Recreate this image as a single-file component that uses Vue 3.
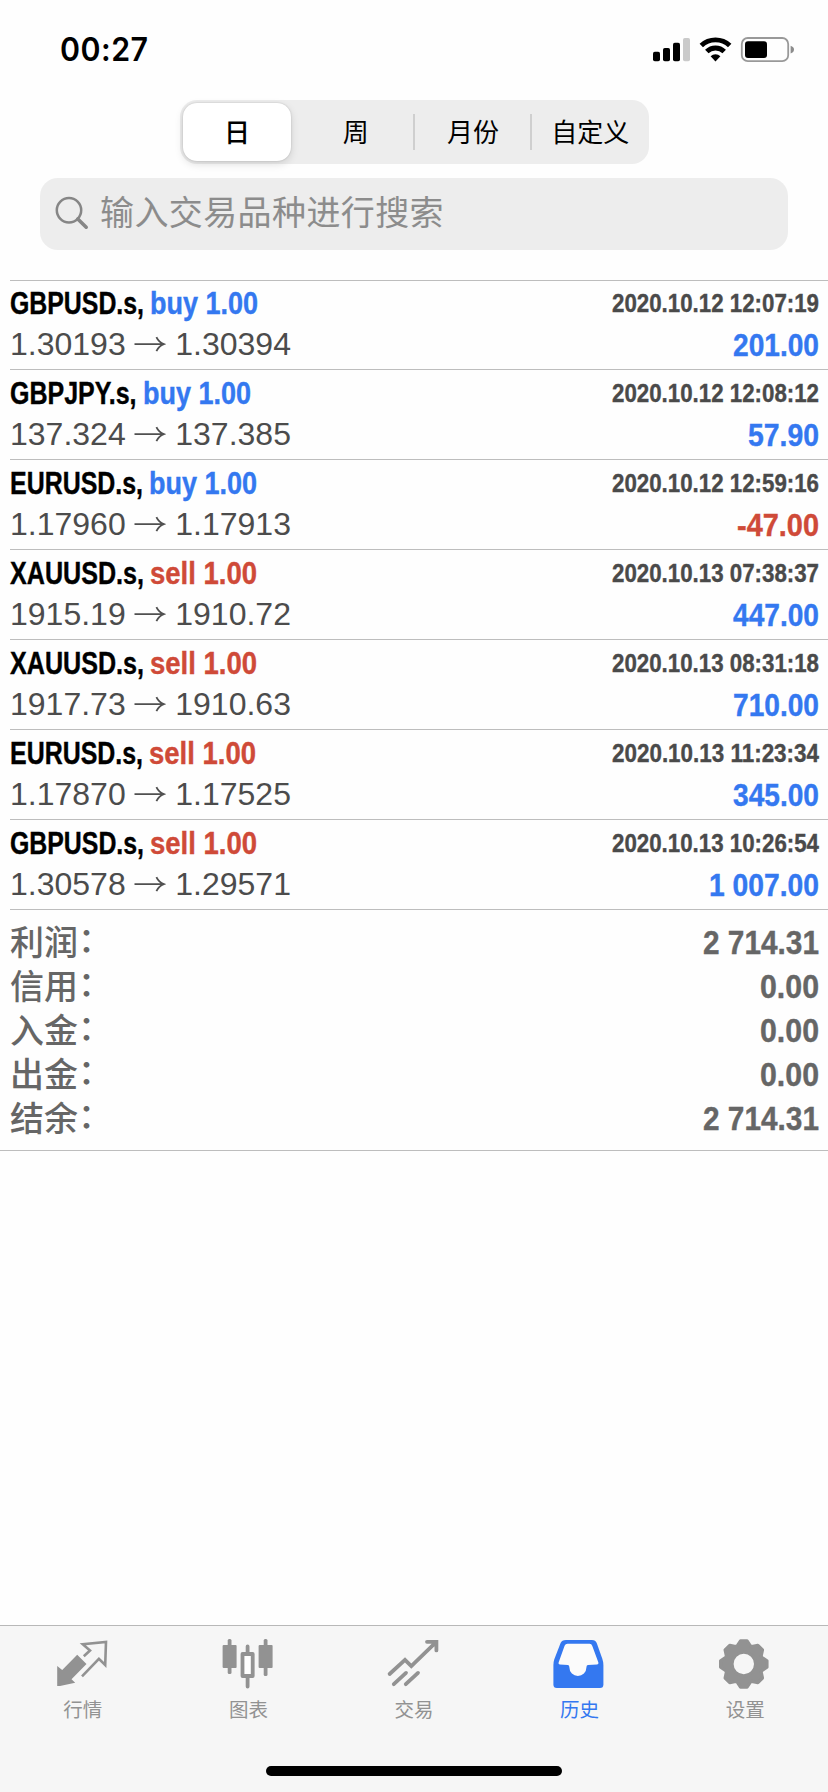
<script setup>
const segments = ['日', '周', '月份', '自定义']

const deals = [
  { symbol: 'GBPUSD.s,', sw: 134, side: 'buy', open: '1.30193', close: '1.30394', time: '2020.10.12 12:07:19', profit: '201.00', pw: 86 },
  { symbol: 'GBPJPY.s,', sw: 126.5, side: 'buy', open: '137.324', close: '137.385', time: '2020.10.12 12:08:12', profit: '57.90', pw: 71 },
  { symbol: 'EURUSD.s,', sw: 133, side: 'buy', open: '1.17960', close: '1.17913', time: '2020.10.12 12:59:16', profit: '-47.00', pw: 82 },
  { symbol: 'XAUUSD.s,', sw: 134, side: 'sell', open: '1915.19', close: '1910.72', time: '2020.10.13 07:38:37', profit: '447.00', pw: 86 },
  { symbol: 'XAUUSD.s,', sw: 134, side: 'sell', open: '1917.73', close: '1910.63', time: '2020.10.13 08:31:18', profit: '710.00', pw: 86 },
  { symbol: 'EURUSD.s,', sw: 133, side: 'sell', open: '1.17870', close: '1.17525', time: '2020.10.13 11:23:34', profit: '345.00', pw: 86 },
  { symbol: 'GBPUSD.s,', sw: 134, side: 'sell', open: '1.30578', close: '1.29571', time: '2020.10.13 10:26:54', profit: '1 007.00', pw: 110 },
]

const totals = [
  { label: '利润', value: '2 714.31', w: 116 },
  { label: '信用', value: '0.00', w: 59 },
  { label: '入金', value: '0.00', w: 59 },
  { label: '出金', value: '0.00', w: 59 },
  { label: '结余', value: '2 714.31', w: 116 },
]

const tabs = [
  { id: 'quotes', label: '行情' },
  { id: 'chart', label: '图表' },
  { id: 'trade', label: '交易' },
  { id: 'history', label: '历史' },
  { id: 'settings', label: '设置' },
]

// Condenses a bold label horizontally to the given width.
const vCondense = {
  mounted(el, { value }) {
    const natural = el.getBoundingClientRect().width
    el.style.transform = `scaleX(${value / natural})`
    el.style.marginRight = `${value - natural}px`
  },
}

function gearPath(cx, cy) {
  const pts = []
  for (let i = 0; i < 8; i++) {
    const base = i * 45 - 90
    for (const [da, r] of [[-20, 19.2], [-8, 23.4], [8, 23.4], [20, 19.2]]) {
      const a = ((base + da) * Math.PI) / 180
      pts.push(`${(cx + r * Math.cos(a)).toFixed(2)} ${(cy + r * Math.sin(a)).toFixed(2)}`)
    }
  }
  const hole = `M${cx - 11.8} ${cy}a11.8 11.8 0 1 0 23.6 0a11.8 11.8 0 1 0 -23.6 0Z`
  return `M${pts.join('L')}Z${hole}`
}
const gear = gearPath(24.8, 26)
</script>

<template>
  <div class="screen">
    <header class="status">
      <span v-condense="88.5" class="clock">00:27</span>
      <svg class="indicators" width="142" height="26" viewBox="0 0 142 26">
        <rect x="0" y="14.7" width="7" height="9.6" rx="1.8" />
        <rect x="10" y="10.9" width="7" height="13.4" rx="1.8" />
        <rect x="20" y="5.8" width="7" height="18.5" rx="1.8" />
        <rect x="30" y="0.9" width="7" height="23.4" rx="1.8" fill="#cacaca" />
        <g fill="none" stroke="#000" stroke-width="4.9">
          <path d="M48.3 8.6A20.5 20.5 0 0 1 76.7 8.6" />
          <path d="M53.8 14.6A12.4 12.4 0 0 1 71.2 14.6" />
        </g>
        <path d="M57.6 19.3A7 7 0 0 1 67.4 19.3L62.5 24.4Z" />
        <rect x="88.8" y="1" width="46.4" height="23.2" rx="6" fill="none" stroke="#999" stroke-width="1.8" />
        <rect x="92" y="4.2" width="22" height="16.8" rx="3" />
        <path d="M137.6 8.8Q141 10 141 12.6Q141 15.4 137.6 16.5Z" fill="#8c8c8c" />
      </svg>
    </header>

    <nav class="segmented">
      <button v-for="(s, i) in segments" :key="s" :class="['segment', { active: i === 0 }]">{{ s }}</button>
    </nav>

    <div class="search">
      <svg width="34" height="34" viewBox="0 0 34 34" fill="none" stroke="#868686">
        <circle cx="14" cy="14.2" r="12.2" stroke-width="2.5" />
        <path d="M22.8 23L31.2 31.2" stroke-width="3.6" stroke-linecap="round" />
      </svg>
      <span>输入交易品种进行搜索</span>
    </div>

    <main class="history">
      <article v-for="(d, i) in deals" :key="i" class="deal">
        <div class="line top">
          <div class="name">
            <span v-condense="d.sw" class="bold">{{ d.symbol }}</span>
            <span v-condense="d.side === 'buy' ? 108 : 107" :class="['bold', 'side', d.side]">{{ d.side }} 1.00</span>
          </div>
          <span v-condense="207" class="bold time">{{ d.time }}</span>
        </div>
        <div class="line bottom">
          <div class="prices">
            <span>{{ d.open }}</span>
            <svg width="32" height="18" viewBox="0 0 32 18" fill="none" stroke="#505050" stroke-width="1.8">
              <path d="M0.5 9.2H29.5M22.4 2.2Q24.8 7.2 29.8 9.2Q24.8 11.2 22.4 16.2" />
            </svg>
            <span>{{ d.close }}</span>
          </div>
          <span v-condense="d.pw" :class="['bold', 'profit', d.profit.startsWith('-') ? 'sell' : 'buy']">{{ d.profit }}</span>
        </div>
      </article>
    </main>

    <section class="totals">
      <div v-for="t in totals" :key="t.label" class="total">
        <span class="label">{{ t.label }}<i class="colon">：</i></span>
        <span v-condense="t.w" class="bold value">{{ t.value }}</span>
      </div>
    </section>

    <footer class="tabbar">
      <div class="tabs">
        <a v-for="t in tabs" :key="t.id" :class="['tab', { current: t.id === 'history' }]">
          <svg width="52" height="52" viewBox="0 0 52 52" fill="currentColor">
            <g v-if="t.id === 'quotes'">
              <path d="M0.2 28L5.2 32L20.2 16.7L29.5 26L14.5 41.3L18.2 44.7L3 48H0.2Z" />
              <path d="M26.8 18.2L33 12.5L25.8 6.2L49 3.9L48.2 27L41.9 20.8L25 38.4" fill="none" stroke="currentColor" stroke-width="2.6" />
            </g>
            <g v-else-if="t.id === 'chart'">
              <rect x="0.6" y="7" width="14" height="23" rx="1" />
              <rect x="5.7" y="1" width="3.8" height="35" rx="1.5" />
              <rect x="20.5" y="16" width="10.2" height="22" fill="#fff" stroke="currentColor" stroke-width="3.8" stroke-linejoin="round" />
              <path d="M25.6 8.5V14M25.6 40V48.5" stroke="currentColor" stroke-width="3.8" stroke-linecap="round" />
              <rect x="36.6" y="7" width="14" height="23" rx="1" />
              <rect x="41.7" y="1" width="3.8" height="37" rx="1.5" />
            </g>
            <g v-else-if="t.id === 'trade'" fill="none" stroke="currentColor" stroke-width="3.8" stroke-linecap="round">
              <path d="M1.6 36L17 21.9L23.3 28L47.8 4.4M39 3.8H48.4V12.4M5.8 46.2L18 34.9M17.8 46.2L30 34.9" />
            </g>
            <g v-else-if="t.id === 'history'">
              <path d="M12 2H38Q41.5 2 42.7 5L48.4 21Q49.4 24 49.4 27V46.5Q49.4 50 46 50H2.8Q-0.6 50 -0.6 46.5V27Q-0.6 24 0.4 21L6.6 5Q7.8 2 12 2Z" />
              <path d="M13.5 5.8H35.6Q37.6 5.8 38.2 7.8L44.4 24.4Q44.8 26.4 43 26.5L33.8 27Q32.4 27 32.4 29.6A8.5 8.4 0 0 1 15.4 29.6Q15.4 27 14 27L6 26.5Q4 26.4 4.6 24.4L10.6 7.8Q11.4 5.8 13.5 5.8Z" fill="#fbfbfb" />
            </g>
            <path v-else :d="gear" fill-rule="evenodd" stroke="currentColor" stroke-width="3.2" stroke-linejoin="round" />
          </svg>
          <span>{{ t.label }}</span>
        </a>
      </div>
      <div class="home"></div>
    </footer>
  </div>
</template>

<style>
html,
body {
  background: #fefefe;
}
</style>

<style scoped>
.screen {
  width: 828px;
  height: 1792px;
  display: flex;
  flex-direction: column;
  background: #fefefe;
  overflow: hidden;
  font-family: "Liberation Sans", "Noto Sans CJK SC", sans-serif;
}
.status {
  height: 100px;
  flex: none;
  box-sizing: border-box;
  padding: 36px 33px 0 59.5px;
  display: flex;
  justify-content: space-between;
  align-items: flex-start;
}
.clock {
  display: inline-block;
  transform-origin: left;
  font: 600 32px/28px Inter, sans-serif;
  letter-spacing: 0.5px;
}
.indicators {
  margin-top: 0.7px;
}
.segmented {
  flex: none;
  box-sizing: border-box;
  width: 469px;
  height: 64px;
  margin-left: 180px;
  padding: 3px 0;
  display: grid;
  grid-template-columns: repeat(4, 1fr);
  background: #ededed;
  border-radius: 17px;
}
.segment {
  border: 0;
  padding: 0 0 2px;
  background: linear-gradient(#cfcfcf, #cfcfcf) no-repeat right center / 2px 36px;
  color: #000;
  font: 400 26px/56px "Noto Sans CJK SC", sans-serif;
  white-space: nowrap;
}
.segment:last-child {
  background: none;
}
.segment.active {
  margin: 0 6px 0 3px;
  background: #fff;
  border-radius: 14px;
  font-weight: 500;
  box-shadow: 0 3px 8px rgba(0, 0, 0, 0.13), 0 0 2px rgba(0, 0, 0, 0.18);
}
.search {
  flex: none;
  box-sizing: border-box;
  height: 72px;
  margin: 14px 40px 0;
  padding: 0 15px 2px;
  display: flex;
  align-items: center;
  gap: 11px;
  background: #ededed;
  border-radius: 18px;
  color: #8c8c8c;
  font: 400 34px/66px "Noto Sans CJK SC", sans-serif;
  letter-spacing: 0.4px;
}
.search span {
  margin-bottom: 4px;
}
.history {
  flex: none;
  margin: 30px 0 0 10px;
  border-top: 1px solid #bdbdbd;
}
.deal {
  box-sizing: border-box;
  height: 90px;
  padding-right: 9px;
  border-bottom: 1px solid #bdbdbd;
}
.line {
  display: flex;
  justify-content: space-between;
}
.line.top {
  height: 46px;
  line-height: 46px;
}
.line.bottom {
  height: 36px;
  line-height: 36px;
}
.deal:first-child {
  height: 89px;
}
.deal:first-child .line.top {
  height: 45px;
  line-height: 45px;
}
.name {
  display: flex;
  gap: 6px;
}
.bold {
  display: inline-block;
  transform-origin: left;
  white-space: pre;
  font-size: 32px;
  font-weight: 700;
  -webkit-text-stroke: 0.4px currentColor;
}
.bold.time {
  color: #4a4a4a;
  font-size: 26px;
}
.buy {
  color: #3478f0;
}
.sell {
  color: #cf4a38;
}
.profit {
  line-height: 38px;
}
.prices {
  display: flex;
  gap: 8.8px;
  color: #4c4c4c;
  font-size: 32px;
}
.prices svg {
  margin-top: 9px;
}
.totals {
  flex: none;
  height: 220px;
  padding: 10px 9px 10px 10px;
  border-bottom: 1px solid #bdbdbd;
  color: #666;
}
.total {
  height: 44px;
  display: flex;
  justify-content: space-between;
}
.label {
  font: 500 34px/42px "Noto Sans CJK SC", sans-serif;
}
.colon {
  display: inline-block;
  font-style: normal;
  transform: translateY(-3px);
}
.value {
  font-size: 34px;
  line-height: 44px;
}
.tabbar {
  flex: none;
  box-sizing: border-box;
  height: 167px;
  margin-top: auto;
  padding-top: 12px;
  border-top: 1px solid #b8b8b8;
  background: #f6f6f6;
}
.tabs {
  display: grid;
  grid-template-columns: repeat(5, 1fr);
}
.tab {
  display: flex;
  flex-direction: column;
  align-items: center;
  height: 128px;
  color: #929292;
  font: 400 19.5px/28px "Noto Sans CJK SC", sans-serif;
}
.tab svg {
  overflow: visible;
}
.tab span {
  margin-top: 5px;
}
.tab.current {
  color: #3478f0;
}
.home {
  width: 296px;
  height: 10px;
  margin: 0 auto;
  border-radius: 5px;
  background: #000;
}
</style>
